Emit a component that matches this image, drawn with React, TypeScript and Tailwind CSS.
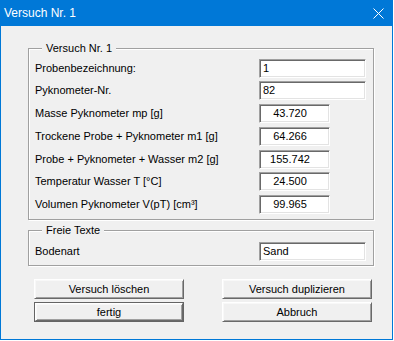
import React from 'react';

interface Field {
  label: string;
  value: string;
  wide: boolean;
  gap: string;
}

const fields: Field[] = [
  { label: 'Probenbezeichnung:', value: '1', wide: true, gap: 'mt-0' },
  { label: 'Pyknometer-Nr.', value: '82', wide: true, gap: 'mt-[3px]' },
  { label: 'Masse Pyknometer mp [g]', value: '43.720', wide: false, gap: 'mt-[4px]' },
  { label: 'Trockene Probe + Pyknometer m1 [g]', value: '64.266', wide: false, gap: 'mt-[4px]' },
  { label: 'Probe + Pyknometer + Wasser m2 [g]', value: '155.742', wide: false, gap: 'mt-[4px]' },
  { label: 'Temperatur Wasser T [°C]', value: '24.500', wide: false, gap: 'mt-[3px]' },
  { label: 'Volumen Pyknometer V(pT) [cm³]', value: '99.965', wide: false, gap: 'mt-[4px]' },
];

const font = "font-['Liberation_Sans',Arial,sans-serif]";

// sunken edit box
const Edit = ({ value, wide }: { value: string; wide: boolean }) => (
  <div
    className={`h-[19px] border border-t-[#a0a0a0] border-l-[#a0a0a0] border-r-white border-b-white bg-white text-[11px] leading-[17px] text-black shadow-[inset_1px_1px_0_#696969,inset_-1px_-1px_0_#e3e3e3] ${
      wide ? 'w-[107px] pl-[3px]' : 'w-[71px] pr-[9px] text-center'
    }`}
  >
    {value}
  </div>
);

const Button = ({ label, isDefault }: { label: string; isDefault?: boolean }) => (
  <div
    className={`h-[20px] w-[150px] ${
      isDefault ? 'border border-[#646464]' : ''
    }`}
  >
    <div className="flex h-full w-full items-center justify-center border border-t-white border-l-white border-r-[#696969] border-b-[#696969] bg-[#f0f0f0] text-[11px] text-black shadow-[inset_1px_1px_0_#f8f8f8,inset_-1px_-1px_0_#a0a0a0]">
      {label}
    </div>
  </div>
);

const GroupBox = ({
  title,
  className,
  children,
}: {
  title: string;
  className: string;
  children: React.ReactNode;
}) => (
  <fieldset
    className={`ml-[27px] w-[346px] border border-[#a0a0a0] pl-[6px] shadow-[inset_1px_1px_0_#ffffff,1px_1px_0_#ffffff] ${className}`}
  >
    <legend className="ml-[7px] bg-[#f0f0f0] px-[4px] text-[11px] leading-[13px] text-black">
      {title}
    </legend>
    {children}
  </fieldset>
);

export default function App() {
  return (
    <div className={`h-[341px] w-[394px] bg-white ${font}`}>
      <div className="flex h-[340px] w-[393px] flex-col border-x border-b border-[#0078d7] bg-[#f0f0f0]">
        {/* Title bar */}
        <div className="flex h-[26px] shrink-0 items-center justify-between bg-[#0078d7] pl-[3px] pr-[8px]">
          <span className="text-[12px] text-white">Versuch Nr. 1</span>
          <svg width="11" height="11" viewBox="0 0 11 11" className="mt-[1px]">
            <path d="M0.5 0.5 L10.5 10.5 M10.5 0.5 L0.5 10.5" stroke="white" strokeWidth="1" />
          </svg>
        </div>

        <GroupBox title="Versuch Nr. 1" className="mt-[16px] pb-[5px] pt-[4px]">
          {fields.map((f) => (
            <div key={f.label} className={`flex h-[19px] items-center ${f.gap}`}>
              <span className="w-[224px] text-[11px] text-black">{f.label}</span>
              <Edit value={f.value} wide={f.wide} />
            </div>
          ))}
        </GroupBox>

        <GroupBox title="Freie Texte" className="mt-[4px] pb-[4px] pt-[5px]">
          <div className="flex h-[19px] items-center">
            <span className="w-[224px] text-[11px] text-black">Bodenart</span>
            <Edit value="Sand" wide />
          </div>
        </GroupBox>

        <div className="ml-[33px] mt-[13px] grid grid-cols-[150px_150px] gap-x-[38px] gap-y-[3px]">
          <Button label="Versuch löschen" />
          <Button label="Versuch duplizieren" />
          <Button label="fertig" isDefault />
          <Button label="Abbruch" />
        </div>
      </div>
    </div>
  );
}
